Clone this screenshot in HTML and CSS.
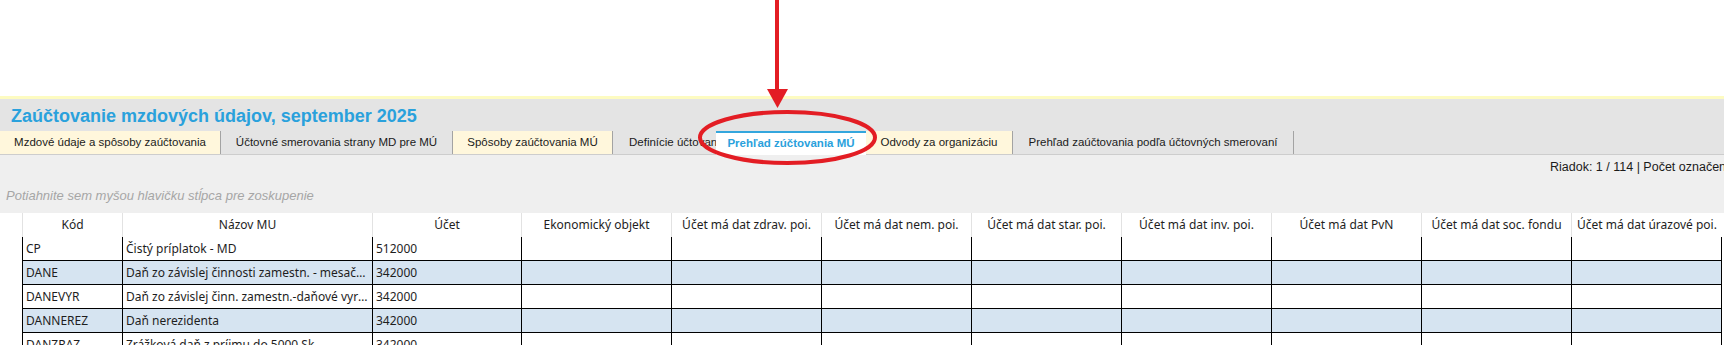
FILE: index.html
```html
<!DOCTYPE html>
<html lang="sk">
<head>
    <meta charset="UTF-8">
    <meta name="viewport" content="width=device-width, initial-scale=1.0">
    <title>Zaúčtovanie mzdových údajov</title>
    <link rel="stylesheet" href="styles.css">
</head>
<body>
    <div class="top-space"></div>

    <div class="window">
        <div class="title-bar">
            <h1>Zaúčtovanie mzdových údajov, september 2025</h1>
        </div>

        <div class="tabs">
            <div class="tab tab-yellow tab-1">Mzdové údaje a spôsoby zaúčtovania</div>
            <div class="tab tab-2">Účtovné smerovania strany MD pre MÚ</div>
            <div class="tab tab-yellow tab-3">Spôsoby zaúčtovania MÚ</div>
            <div class="tab tab-clipped tab-4">Definície účtovania</div>
            <div class="tab tab-active tab-5">Prehľad zúčtovania MÚ</div>
            <div class="tab tab-yellow tab-6">Odvody za organizáciu</div>
            <div class="tab tab-7">Prehľad zaúčtovania podľa účtovných smerovaní</div>
        </div>

        <div class="status">Riadok: 1 / 114 | Počet označených riadkov: 0</div>
        <div class="group-panel">Potiahnite sem myšou hlavičku stĺpca pre zoskupenie</div>

        <div class="grid">
            <div class="grid-row grid-head">
                <div class="cell indicator"></div>
                <div class="cell">Kód</div>
                <div class="cell">Názov MU</div>
                <div class="cell">Účet</div>
                <div class="cell">Ekonomický objekt</div>
                <div class="cell">Účet má dat zdrav. poi.</div>
                <div class="cell">Účet má dat nem. poi.</div>
                <div class="cell">Účet má dat star. poi.</div>
                <div class="cell">Účet má dat inv. poi.</div>
                <div class="cell">Účet má dat PvN</div>
                <div class="cell">Účet má dat soc. fondu</div>
                <div class="cell last">Účet má dat úrazové poi.</div>
            </div>

            <div class="grid-body" id="grid-body">
                <!-- rows are generated below -->
            </div>
        </div>
    </div>

    <!-- red annotation drawn over the screenshot -->
    <svg class="annotation" width="1724" height="345" viewBox="0 0 1724 345">
        <line x1="777" y1="0" x2="777" y2="92" stroke="#e31d24" stroke-width="4"/>
        <polygon points="767,89 788,89 777.5,108" fill="#e31d24"/>
        <ellipse cx="787.5" cy="137.5" rx="87.5" ry="25.5" fill="none" stroke="#e31d24" stroke-width="4"/>
    </svg>

    <script>
        // Rows of the grid
        const rows = [
            ['CP', 'Čistý príplatok - MD', '512000'],
            ['DANE', 'Daň zo závislej činnosti zamestn. - mesačný preddavok', '342000'],
            ['DANEVYR', 'Daň zo závislej činn. zamestn.-daňové vyrovnanie', '342000'],
            ['DANNEREZ', 'Daň nerezidenta', '342000'],
            ['DANZRAZ', 'Zrážková daň z príjmu do 5000 Sk', '342000']
        ];

        const body = document.getElementById('grid-body');
        let html = '';

        rows.forEach(function (row, i) {
            html += '<div class="grid-row' + (i % 2 === 1 ? ' alt' : '') + '">';
            html += '<div class="cell indicator"></div>';
            html += '<div class="cell">' + row[0] + '</div>';
            html += '<div class="cell">' + row[1] + '</div>';
            html += '<div class="cell">' + row[2] + '</div>';
            for (let j = 0; j < 7; j++) {
                html += '<div class="cell"></div>';
            }
            html += '<div class="cell last"></div>';
            html += '</div>';
        });

        body.innerHTML = html;
    </script>
</body>
</html>
```

FILE: styles.css
```css
* {
    box-sizing: border-box;
}
html, body {
    margin: 0;
}
body {
    position: relative;
    width: 1724px;
    height: 345px;
    overflow: hidden;
    background-color: white;
    font-family: "Liberation Sans", Arial, sans-serif;
    color: #1b1b1b;
}
.top-space {
    height: 96px;
}
.window {
    border-top: 3px solid #fdfbc1;
}
.title-bar {
    height: 32px;
    padding: 6px 0 0 11px;
    background-color: #e4e4e4;
}
.title-bar h1 {
    margin: 0;
    font-size: 18px;
    line-height: 22px;
    font-weight: bold;
    color: #2aa1dc;
}
.tabs {
    display: flex;
    align-items: flex-start;
    height: 24px;
    background-color: #e4e4e4;
    border-bottom: 1px solid #cdcdcd;
}
.tab {
    flex: none;
    height: 23px;
    line-height: 23px;
    font-size: 11.5px;
    text-align: center;
    white-space: nowrap;
    overflow: hidden;
    border-right: 1px solid #a3a3a3;
}
.tab-yellow {
    background-color: #fff7dc;
}
.tab-clipped {
    text-align: left;
    padding-left: 16px;
    border-right: none;
}
.tab-active {
    height: 24px;
    line-height: 21px;
    background-color: white;
    border-top: 2px solid #33a6dd;
    border-right: none;
    color: #2aa1dc;
    font-weight: bold;
}
.tab-1 { width: 221px; }
.tab-2 { width: 232px; }
.tab-3 { width: 160px; }
.tab-4 { width: 103px; }
.tab-5 { width: 150px; }
.tab-6 { width: 147px; }
.tab-7 { width: 281px; }

.status {
    height: 24px;
    line-height: 24px;
    padding-left: 1550px;
    font-size: 12.5px;
    white-space: nowrap;
    overflow: hidden;
    background-color: #efefef;
}
.group-panel {
    height: 34px;
    line-height: 34px;
    padding-left: 6px;
    font-size: 13px;
    font-style: italic;
    color: #a6a6a6;
    background-color: #efefef;
}

.grid {
    font-family: "Noto Sans", "Open Sans", sans-serif;
    font-size: 12px;
    color: #1e1e1e;
}
.grid-row {
    display: grid;
    grid-template-columns: 22px 100px 250px 149px repeat(7, 150px) 151px;
    height: 24px;
}
.cell {
    overflow: hidden;
    white-space: nowrap;
    text-overflow: ellipsis;
}
.grid-head .cell {
    line-height: 24px;
    text-align: center;
    border-left: 1px solid #e2e2e2;
}
.grid-head .cell.indicator {
    border-left: none;
}
.grid-body .cell {
    line-height: 23px;
    padding: 0 3px;
    border-left: 1px solid black;
    border-bottom: 1px solid black;
}
.grid-body .cell.last {
    border-right: 1px solid black;
}
.grid-body .cell.indicator {
    border: none;
}
.grid-body .alt .cell {
    background-color: #d6e4f1;
}
.grid-body .alt .cell.indicator {
    background-color: white;
}

.annotation {
    position: absolute;
    top: 0;
    left: 0;
    pointer-events: none;
}
```
